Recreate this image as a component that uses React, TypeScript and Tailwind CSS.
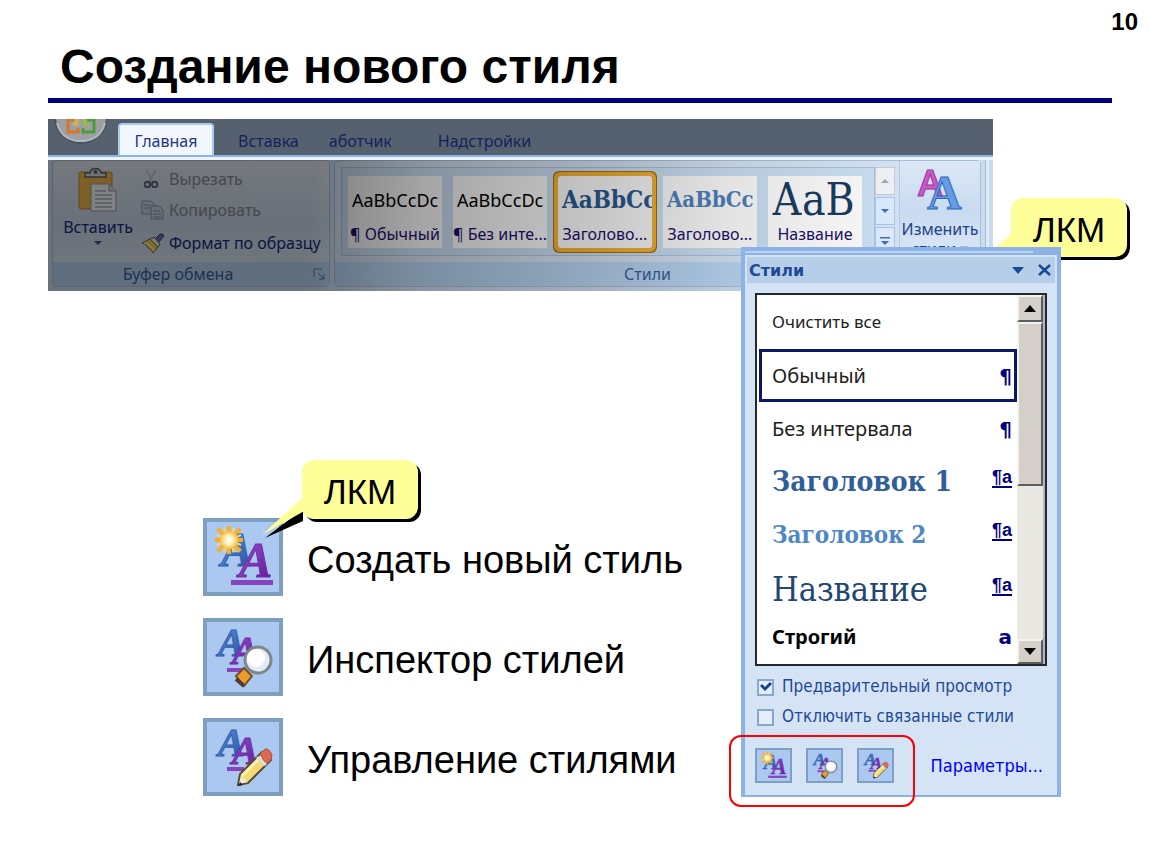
import { useState } from "react";
import type { ReactNode } from "react";

const serif = "font-['DejaVu_Serif_Condensed','DejaVu_Serif',serif]";

function StyleGlyph({ kind, className }: { kind: "new" | "inspect" | "manage"; className: string }) {
  const isNew = kind === "new";
  return (
    <svg viewBox="4 4 72 70" className={className} aria-hidden="true">
      <defs>
        <linearGradient id={"blue-" + kind} x1="0" y1="0" x2="1" y2="1">
          <stop offset="0" stopColor="#6da3ee" />
          <stop offset="1" stopColor="#1f4798" />
        </linearGradient>
        <linearGradient id={"violet-" + kind} x1="0" y1="0" x2="1" y2="1">
          <stop offset="0" stopColor="#a55ad6" />
          <stop offset="1" stopColor="#5a1590" />
        </linearGradient>
        <radialGradient id={"glow-" + kind}>
          <stop offset="0" stopColor="#ffffff" />
          <stop offset="0.45" stopColor="#fff3c2" />
          <stop offset="1" stopColor="#f6bd3c" />
        </radialGradient>
      </defs>
      <g fontFamily="Liberation Serif, serif" fontWeight="700" fontStyle="italic">
        <text x={isNew ? 18 : 15} y={isNew ? 48 : 38} fontSize={isNew ? 48 : 40} fill={"url(#blue-" + kind + ")"} stroke="#2f5fb0" strokeWidth="1">A</text>
        <text x={isNew ? 36 : 29} y={isNew ? 59 : 46} fontSize={isNew ? 50 : 40} fill={"url(#violet-" + kind + ")"} stroke="#7030a8" strokeWidth="1">A</text>
      </g>
      {isNew && (
        <>
          <rect x="28" y="62" width="42" height="5" fill="#8744bf" />
          <g stroke="#f3b02f" strokeWidth="4" strokeLinecap="square">
            <path d="M26 10v24M14 22h24M16 12l20 20M36 12L16 32" />
          </g>
          <g stroke="#f8d277" strokeWidth="2">
            <path d="M21 10l10 24M31 10L21 34M14 17l24 10M38 17L14 27" />
          </g>
          <circle cx="26" cy="22" r="9" fill={"url(#glow-" + kind + ")"} />
        </>
      )}
      {kind === "inspect" && (
        <>
          <rect x="24" y="50" width="17" height="4" fill="#8744bf" />
          <path d="M33 58l8-8 8 8-8 10z" fill="#ee9a2c" stroke="#70512c" strokeWidth="2" />
          <path d="M33 61l8 7" stroke="#4a4038" strokeWidth="4" />
          <circle cx="55" cy="42" r="13" fill="#e4eaf8" stroke="#7d8788" strokeWidth="3" />
          <circle cx="53" cy="40" r="9" fill="#ffffff" />
        </>
      )}
      {kind === "manage" && (
        <>
          <rect x="24" y="49" width="17" height="4" fill="#8744bf" />
          <path d="M35 67l2-11 22-22 9 8-23 23z" fill="#f3d975" stroke="#594e38" strokeWidth="2" />
          <path d="M39 58l21-21" stroke="#fff3ae" strokeWidth="3" />
          <path d="M57 36l5-5q4-1 7 6l-1 5-5 4z" fill="#dc6a52" stroke="#9f5144" />
          <path d="M54 39l9 8" stroke="#d9dde0" strokeWidth="3" />
          <path d="M36 66l2-8 7 6z" fill="#eee8d4" />
          <path d="M35 68l2-4 3 3z" fill="#222" />
        </>
      )}
    </svg>
  );
}

function Callout({ children }: { children: ReactNode }) {
  return (
    <div className="relative flex h-[59px] w-[116px] items-center justify-center rounded-xl bg-[#ffff99] pt-1 text-[35px] leading-10 text-black shadow-[3px_3px_0_#000]">
      {children}
    </div>
  );
}

function StyleCard({ sample, name, sampleClass, selected }: { sample: string; name: string; sampleClass: string; selected?: boolean }) {
  return (
    <button
      type="button"
      className={
        "flex h-[72px] w-[94px] shrink-0 flex-col overflow-hidden bg-[#f7f7f7] text-[#1c0f6a] " +
        (selected ? "rounded-xs outline-4 outline-[#f0b030] ring-[5px] ring-[#a56a10]" : "")
      }
    >
      <span className={"flex h-12 w-full items-center overflow-hidden whitespace-nowrap pl-1 " + sampleClass}>{sample}</span>
      <span className="w-full whitespace-nowrap text-center text-base leading-5">{name}</span>
    </button>
  );
}

function ClipboardIcon() {
  return (
    <svg viewBox="0 0 40 46" className="h-[46px] w-10" aria-hidden="true">
      <rect x="1" y="5" width="33" height="37" rx="2" fill="#f2b84b" stroke="#b98a35" />
      <path d="M7 10V6h5c1-6 10-6 11 0h5v4z" fill="#d6dae0" stroke="#5e6064" strokeWidth="1.5" />
      <circle cx="17.500" cy="5" r="2" fill="#595c60" />
      <path d="M13 17h18l7 7v20H13z" fill="#f5f7fa" stroke="#8f98a8" />
      <path d="M31 17v7h7" fill="#cbd3df" stroke="#8f98a8" />
      <path d="M17 24h11M17 28h17M17 32h17M17 36h17M17 40h17" stroke="#a7afbd" strokeWidth="1.5" />
    </svg>
  );
}

function ScissorsIcon() {
  return (
    <svg viewBox="0 0 22 22" className="size-5" fill="none" stroke="#56657c" strokeWidth="2" aria-hidden="true">
      <path d="M6 1l7 13M16 1L9 14" stroke="#b9c5d6" />
      <circle cx="7" cy="17" r="3" />
      <circle cx="15" cy="17" r="3" />
    </svg>
  );
}

function CopyIcon() {
  return (
    <svg viewBox="0 0 24 20" className="h-5 w-6" fill="#c9d3e0" stroke="#8393aa" aria-hidden="true">
      <path d="M1 1h9l4 4v9H1z" />
      <path d="M10 6h8l4 4v9H10z" />
      <path d="M3 5h6M3 8h6M12 11h7M12 14h8M12 17h8" />
    </svg>
  );
}

function BrushIcon() {
  return (
    <svg viewBox="0 0 24 22" className="h-[22px] w-6" aria-hidden="true">
      <path d="M13 8l6-6q3-1 4 2l-6 7z" fill="#6075a8" stroke="#36446c" />
      <path d="M9 7l4-2 6 7-2 3z" fill="#e3e6ea" stroke="#555b66" />
      <path d="M1 11l8-4 8 8-5 6q-2-5-5-5-1-4-6-5z" fill="#f4cb49" stroke="#7a6833" />
      <path d="M3 11q6 1 10 8" fill="none" stroke="#fff2b0" strokeWidth="1.5" />
    </svg>
  );
}

function Ribbon() {
  const menuButton = "flex h-[33px] items-center gap-1 whitespace-nowrap text-base";
  return (
    <section aria-label="Лента" className="relative w-full max-w-[945px] overflow-hidden bg-[#56616f] font-['Noto_Sans',sans-serif]">
      <svg viewBox="0 0 56 28" className="absolute left-1.5 top-0 h-7 w-14" aria-hidden="true">
        <circle cx="27" cy="-2" r="26" fill="#9ba0a5" stroke="#495360" strokeWidth="2" />
        <path d="M3 4q5 18 24 18T51 4" fill="none" stroke="#b4b8bc" strokeWidth="2" />
        <g fill="none" strokeWidth="3">
          <path d="M20 1h-6v12h10v-4" stroke="#d8732a" />
          <path d="M23 0v5h-4" stroke="#e0b13c" />
          <path d="M33 1h7v12H29V9" stroke="#4f9a3d" />
          <path d="M30 0v5h5" stroke="#9fbd35" />
        </g>
      </svg>
      <nav className="flex h-9 items-end pl-[70px] text-base text-[#14235a]">
        <button type="button" className="h-8 w-24 rounded-t-sm border-x-2 border-t-2 border-[#a9c9f3] bg-[#f2f7fd] pt-0.5 text-[#1c3880]">Главная</button>
        <div className="flex h-8 items-center gap-[30px] pl-6 pt-1">
          <button type="button">Вставка</button>
          <button type="button">аботчик</button>
          <button type="button" className="ml-4">Надстройки</button>
        </div>
      </nav>
      <div className="h-[5px] border-t-2 border-[#8db3ec] bg-[#eef4fd]" />
      <div className="relative flex h-[131px] gap-1 bg-[#cbdcef] px-1 pb-1">
        <div className="flex w-[278px] shrink-0 flex-col rounded border border-[#a5bdd9] bg-linear-to-b from-[#dfe7f0] via-[#c9d7e8] to-[#dce8f5]">
          <div className="flex flex-1 pl-2 pt-1">
            <button type="button" className="flex w-[74px] flex-col items-center text-base leading-5 text-[#102a7c]">
              <span className="mb-1 mt-0.5"><ClipboardIcon /></span>
              Вставить
              <svg viewBox="0 0 8 4" className="mt-1 h-1 w-2" aria-hidden="true"><path d="M0 0h8L4 4z" fill="#36538d" /></svg>
            </button>
            <div className="flex flex-col pl-1.5 text-[#102a7c]">
              <button type="button" disabled className={menuButton + " h-7! text-[#85898f]"}><ScissorsIcon /><span className="pl-1">Вырезать</span></button>
              <button type="button" disabled className={menuButton + " text-[#85898f]"}><CopyIcon />Копировать</button>
              <button type="button" className={menuButton}><BrushIcon />Формат по образцу</button>
            </div>
          </div>
          <div className="flex h-6 items-center bg-[#b7d3ef] text-base text-[#3b5e98]">
            <span className="flex-1 pr-2.5 text-center">Буфер обмена</span>
            <svg viewBox="0 0 12 12" className="mr-1 size-3" fill="none" stroke="#506e96" aria-hidden="true"><path d="M1 9V1h8M5 5l5 5M11 6v5H6" /></svg>
          </div>
        </div>
        <div className="flex min-w-0 flex-1 flex-col rounded border border-[#a5bdd9] bg-[#d2e0ef]">
          <div className="flex flex-1">
            <div className="my-1.5 ml-1.5 flex w-[534px] shrink-0 items-center gap-[11px] border border-[#a9c0dd] bg-[#c8dcf0] pl-1.5">
              <StyleCard sample="AaBbCcDc" name="¶ Обычный" sampleClass="text-lg text-black" />
              <StyleCard sample="AaBbCcDc" name="¶ Без инте..." sampleClass="text-lg text-black" />
              <StyleCard sample="AaBbCc" name="Заголово..." selected sampleClass={"text-2xl font-bold text-[#29588f] " + serif} />
              <StyleCard sample="AaBbCc" name="Заголово..." sampleClass={"text-[22px] font-bold text-[#4b80b8] " + serif} />
              <StyleCard sample="АаВ" name="Название" sampleClass={"text-[44px] leading-10 text-[#193b61] " + serif} />
            </div>
            <div className="mt-1.5 flex w-5 flex-col gap-0.5">
              <button type="button" aria-label="Вверх" className="flex h-7 items-center justify-center border border-[#c5cad2] bg-[#edf0f2]"><svg viewBox="0 0 8 4" className="h-1 w-2"><path d="M0 4h8L4 0z" fill="#a2a6aa" /></svg></button>
              <button type="button" aria-label="Вниз" className="flex h-7 items-center justify-center border border-[#a7c3e9] bg-[#d9e8fa]"><svg viewBox="0 0 8 4" className="h-1 w-2"><path d="M0 0h8L4 4z" fill="#426cae" /></svg></button>
              <button type="button" aria-label="Все стили" className="flex h-7 items-center justify-center border border-[#a7c3e9] bg-[#d9e8fa]"><svg viewBox="0 0 10 8" className="h-2 w-2.5"><path d="M0 0h10v1.500H0zM1 4h8L5 8z" fill="#426cae" /></svg></button>
            </div>
            <button type="button" className="ml-1 flex flex-1 flex-col items-center border-l border-[#b5cae5] bg-linear-to-b from-[#dce7f5] via-[#c9dbf0] to-[#dce9f8] pt-1.5 text-base leading-5 text-[#1e428b]">
              <svg viewBox="0 0 46 44" className="h-11 w-[46px] shrink-0" aria-hidden="true">
                <text x="1" y="29" fontSize="36" fontFamily="Noto Sans, sans-serif" fontWeight="600" fill="#ca59c6" stroke="#9b369e">A</text>
                <text x="10" y="42" fontSize="48" fontFamily="Liberation Serif, serif" fontWeight="700" fill="#669be5" stroke="#2d66b6">A</text>
              </svg>
              <span className="pt-2">Изменить</span>
              <span>стили ▾</span>
            </button>
          </div>
          <div className="h-6 shrink-0 bg-[#b7d3ef] pr-5 text-center text-base leading-6 text-[#3b5e98]">Стили</div>
        </div>
        <div className="w-1 shrink-0 border-l border-[#a5bdd9] bg-[#dfeaf7]" />
        <div className="pointer-events-none absolute inset-0 bg-[linear-gradient(96deg,rgba(0,0,0,0.48)_0%,rgba(0,0,0,0.48)_28%,rgba(0,0,0,0.33)_40%,rgba(0,0,0,0.2)_58%,rgba(0,0,0,0.08)_72%,rgba(0,0,0,0)_88%)]" />
      </div>
    </section>
  );
}

const styleRows = [
  { name: "Очистить все", mark: "", row: "h-[54px]", text: "text-[17px]" },
  { name: "Обычный", mark: "¶", row: "h-[53px]", text: "text-xl" },
  { name: "Без интервала", mark: "¶", row: "h-[53px]", text: "text-xl" },
  { name: "Заголовок 1", mark: "¶a", row: "h-[53px]", text: "text-[28px] font-bold text-[#2f5f9b] " + serif },
  { name: "Заголовок 2", mark: "¶a", row: "h-[53px]", text: "text-2xl font-bold text-[#4f86c6] " + serif },
  { name: "Название", mark: "¶a", row: "h-14", text: "text-[34px] text-[#21466f] " + serif },
  { name: "Строгий", mark: "a", row: "h-10", text: "text-xl font-bold text-black" },
];

function Option({ label, initial }: { label: string; initial: boolean }) {
  const [on, setOn] = useState(initial);
  return (
    <label className="flex h-[30px] items-center gap-2 whitespace-nowrap">
      <span className="grid size-[17px] place-items-center">
        <input
          type="checkbox"
          checked={on}
          onChange={() => setOn(!on)}
          className="col-start-1 row-start-1 size-[17px] appearance-none border-2 border-[#86a9cc] bg-[#e3eefa]"
        />
        {on && (
          <svg viewBox="0 0 12 10" className="pointer-events-none col-start-1 row-start-1 h-2.5 w-3" fill="none" stroke="#174489" strokeWidth="3" aria-hidden="true">
            <path d="M1 3l4 4 6-6" />
          </svg>
        )}
      </span>
      {label}
    </label>
  );
}

function StylesPanel() {
  const [current, setCurrent] = useState("Обычный");
  const bevel = "border-2 border-l-[#f4f3ef] border-t-[#f4f3ef] border-b-[#5d5d5d] border-r-[#5d5d5d] bg-[#d4d0c8]";
  const tool = "flex h-[35px] w-[37px] items-center justify-center border-2 border-[#7f9fc4] bg-[#abc8f0]";
  return (
    <section aria-label="Стили" className="relative border-x-4 border-b-2 border-[#8db2e8] bg-[#d5e4f4] font-['DejaVu_Sans_Condensed','DejaVu_Sans',sans-serif] text-[#1d4a97]">
      <div className="h-2 bg-[#8db2e8] pt-1"><div className="mr-6 h-0.5 bg-[#b9d3f6]" /></div>
      <header className="flex h-7 items-center border-2 border-b-0 border-[#d5e4f4] bg-[#b7cee9] pl-0.5 pr-1">
        <h2 className="flex-1 pt-0.5 font-['DejaVu_Sans',sans-serif] text-base font-bold">Стили</h2>
        <button type="button" aria-label="Меню панели" className="mr-3.5"><svg viewBox="0 0 12 7" className="h-[7px] w-3"><path d="M0 0h12L6 7z" fill="#154b98" /></svg></button>
        <button type="button" aria-label="Закрыть"><svg viewBox="0 0 13 12" className="h-3 w-[13px]" fill="none" stroke="#154b98" strokeWidth="2.5"><path d="M1 1l11 10M12 1L1 11" /></svg></button>
      </header>
      <div className="px-2.5 pt-2.5">
        <div className="flex border-2 border-[#202a30] bg-white">
          <ul className="min-w-0 flex-1 pb-[7px] pl-0.5 font-['Noto_Sans',sans-serif] text-[#222]">
            {styleRows.map((s) => (
              <li key={s.name}>
                <button
                  type="button"
                  onClick={() => setCurrent(s.name)}
                  className={"flex w-full items-center border-3 pl-2.5 pr-0.5 text-left " + s.row + (current === s.name ? " border-[#0b1767]" : " border-transparent")}
                >
                  <span className={"flex-1 whitespace-nowrap leading-8 " + s.text}>{s.name}</span>
                  {s.mark === "¶a" ? (
                    <span className="mb-1.5 border-b-2 border-[#000080] font-['Liberation_Sans',sans-serif] text-lg font-bold leading-[17px] text-[#000080]">{s.mark}</span>
                  ) : (
                    <span className="font-['DejaVu_Sans',sans-serif] text-xl font-bold leading-6 text-[#000080]">{s.mark}</span>
                  )}
                </button>
              </li>
            ))}
          </ul>
          <div className="flex w-7 flex-col border-r-2 border-[#b0b6ba] bg-[#eae8e3]">
            <button type="button" aria-label="Прокрутить вверх" className={"flex h-[27px] items-center justify-center " + bevel}><svg viewBox="0 0 12 7" className="h-[7px] w-3"><path d="M0 7h12L6 0z" /></svg></button>
            <div className={"h-[164px] " + bevel} />
            <div className="flex-1" />
            <button type="button" aria-label="Прокрутить вниз" className={"flex h-[25px] items-center justify-center " + bevel}><svg viewBox="0 0 12 7" className="h-[7px] w-3"><path d="M0 0h12L6 7z" /></svg></button>
          </div>
        </div>
        <div className="pl-0.5 pt-1.5 text-[17px]">
          <Option label="Предварительный просмотр" initial={true} />
          <Option label="Отключить связанные стили" initial={false} />
        </div>
        <div className="flex items-center gap-3.5 pb-3 pt-4">
          <button type="button" aria-label="Создать стиль" className={tool}><StyleGlyph kind="new" className="size-full" /></button>
          <button type="button" aria-label="Инспектор стилей" className={tool}><StyleGlyph kind="inspect" className="size-full" /></button>
          <button type="button" aria-label="Управление стилями" className={tool}><StyleGlyph kind="manage" className="size-full" /></button>
          <a href="#options" className="ml-auto mr-1 whitespace-nowrap text-lg text-[#0000f5]">Параметры...</a>
        </div>
      </div>
      <div className="pointer-events-none absolute -bottom-3 -left-4 h-[72px] w-[186px] rounded-xl border-2 border-[#fb0000]" />
    </section>
  );
}

const tools = [
  { kind: "new", label: "Создать новый стиль" },
  { kind: "inspect", label: "Инспектор стилей" },
  { kind: "manage", label: "Управление стилями" },
] as const;

export default function App() {
  return (
    <main className="min-h-screen bg-white pb-14 font-['Liberation_Sans',Arial,sans-serif] text-black">
      <div className="flex h-10 items-center justify-end pr-3 pt-1 text-2xl font-bold">10</div>
      <div className="pl-12 pr-[38px]">
        <h1 className="border-b-[5px] border-[#000080] pb-1 pl-3 text-5xl font-bold leading-[54px]">Создание нового стиля</h1>
        <div className="pt-4">
          <Ribbon />
          <div className="flex items-start justify-between pr-[51px]">
            <ul className="ml-[155px] mt-[227px] flex flex-col gap-[22px]">
              {tools.map((t) => (
                <li key={t.kind} className="relative flex items-center gap-6">
                  <div className="h-[78px] w-20 shrink-0 border-4 border-[#7f9fc0] bg-[#abc8f0]">
                    <StyleGlyph kind={t.kind} className="size-full" />
                  </div>
                  <span className="whitespace-nowrap pt-1.5 text-[38px] leading-10">{t.label}</span>
                  {t.kind === "new" && (
                    <div className="absolute -top-[58px] left-[99px]">
                      <svg viewBox="0 0 50 60" className="absolute -left-10 top-6 h-[60px] w-[50px]" aria-hidden="true">
                        <path d="M3 54L41 25v12z" fill="#000" />
                        <path d="M0 51L44 10v16z" fill="#ffff99" />
                      </svg>
                      <Callout>ЛКМ</Callout>
                    </div>
                  )}
                </li>
              ))}
            </ul>
            <div className="relative -mt-11 w-80 shrink-0">
              <div className="absolute -top-[49px] left-[270px]">
                <svg viewBox="0 0 24 24" className="absolute -left-5 top-8 size-6" aria-hidden="true"><path d="M0 22L22 2v20z" fill="#ffff99" /></svg>
                <Callout>ЛКМ</Callout>
              </div>
              <StylesPanel />
            </div>
          </div>
        </div>
      </div>
    </main>
  );
}
